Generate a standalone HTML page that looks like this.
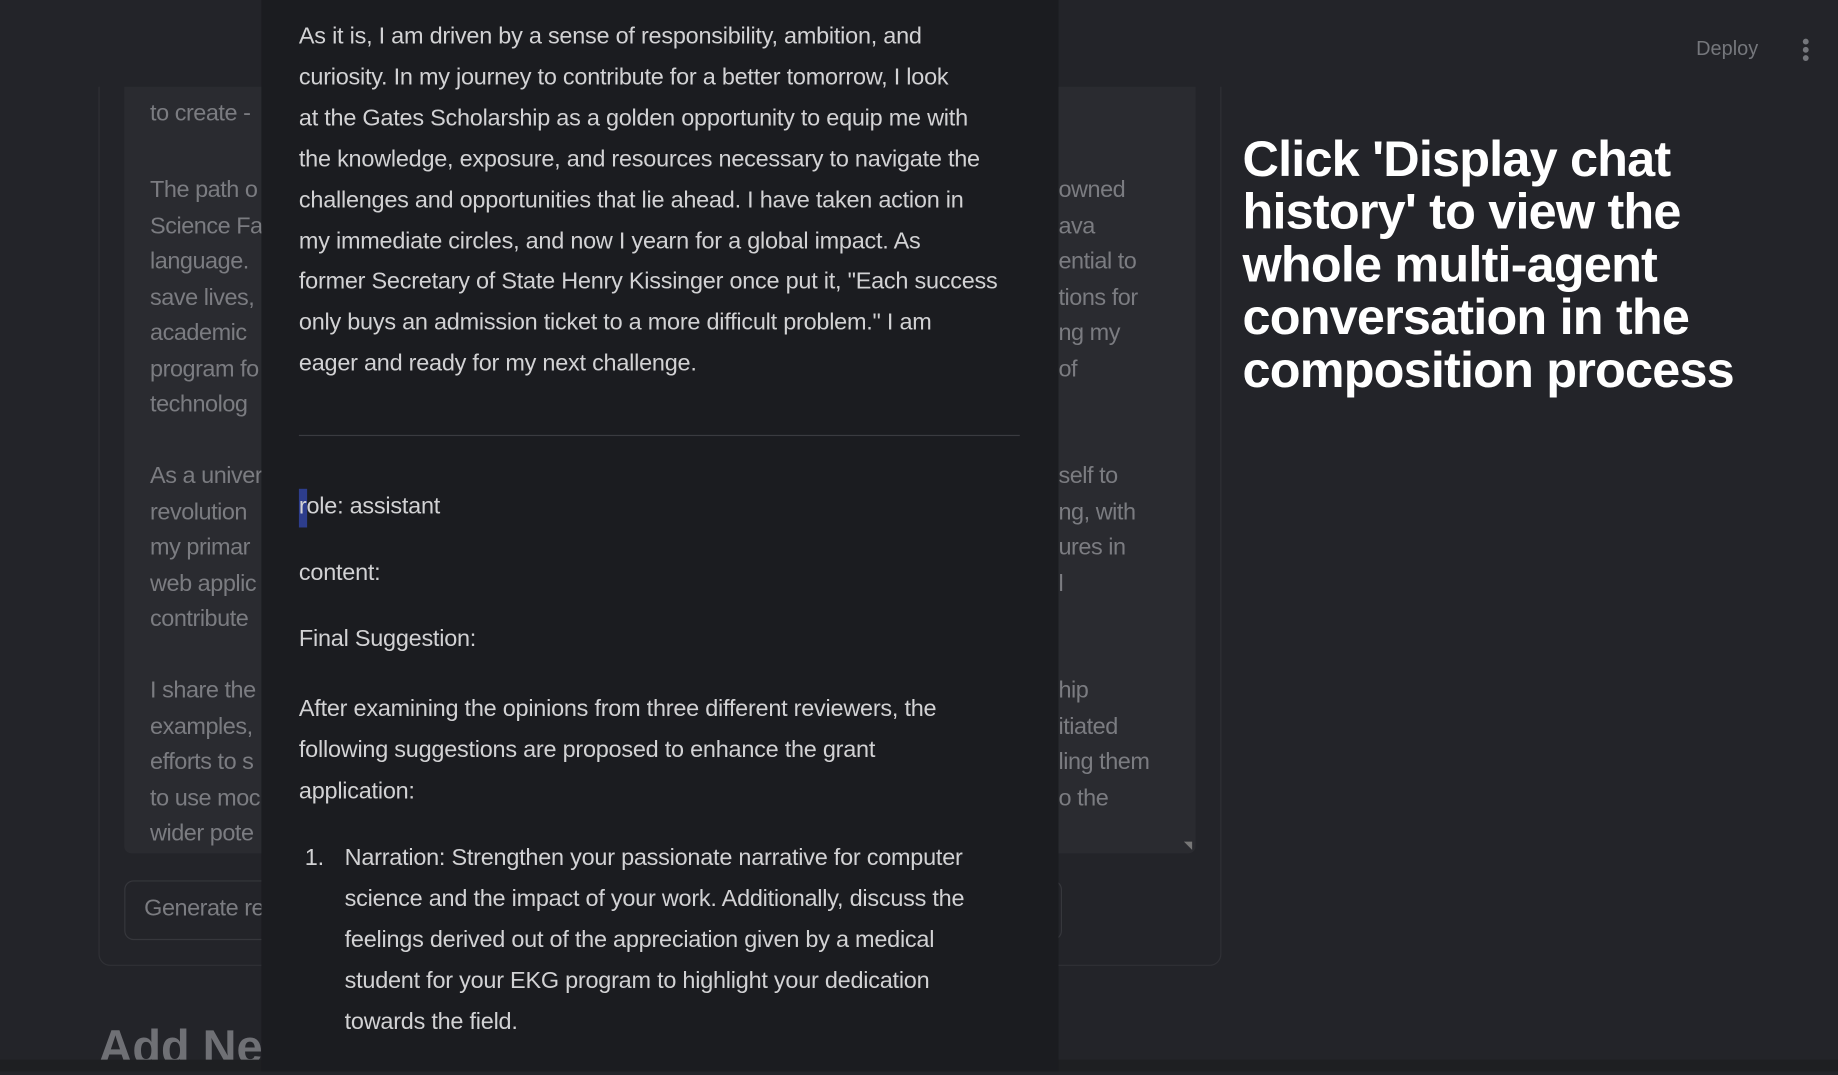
<!DOCTYPE html>
<html><head><meta charset="utf-8"><style>
*{margin:0;padding:0;box-sizing:border-box}
html,body{width:1838px;height:1071px;overflow:hidden;background:#232429}
#w{position:absolute;left:0;top:0;width:1568px;height:914px;transform:scale(1.17219);transform-origin:0 0;font-family:"Liberation Sans",sans-serif}
.a{position:absolute;white-space:nowrap}
.bg{color:#7b7c81;font-size:20px;letter-spacing:-0.4px}
.m{color:#d2d2d4;font-size:20px;letter-spacing:-0.2px}
.h{color:#fff;font-size:43px;font-weight:bold;letter-spacing:-0.7px;line-height:45px}
</style></head><body><div id="w">
<div class="a" style="left:84px;top:40px;width:958px;height:784px;border:1px solid #303136;border-radius:10px"></div>
<div class="a" style="left:106px;top:60px;width:914px;height:668px;background:#2a2b30;border-radius:6px"></div>
<div class="a" style="left:1010px;top:718px;width:0;height:0;border-left:7px solid transparent;border-top:7px solid #777"></div>
<div class="a" style="left:106px;top:751px;width:800px;height:51px;border:1px solid #36373c;border-radius:8px"></div>
<div class="a bg" style="left:123px;top:764px">Generate re</div>
<div class="a" style="left:0;top:0;width:1568px;height:74px;background:#232429"></div>
<div class="a bg" style="left:128px;top:86px">to create -</div>
<div class="a bg" style="left:128px;top:147px;line-height:30.5px">The path o<br>Science Fa<br>language.<br>save lives,<br>academic<br>program fo<br>technolog</div>
<div class="a bg" style="left:128px;top:391px;line-height:30.5px">As a univer<br>revolution<br>my primar<br>web applic<br>contribute</div>
<div class="a bg" style="left:128px;top:574px;line-height:30.5px">I share the<br>examples,<br>efforts to s<br>to use moc<br>wider pote</div>
<div class="a bg" style="left:903px;top:147px;line-height:30.5px">owned<br>ava<br>ential to<br>tions for<br>ng my<br>of</div>
<div class="a bg" style="left:903px;top:391px;line-height:30.5px">self to<br>ng, with<br>ures in<br>l</div>
<div class="a bg" style="left:903px;top:574px;line-height:30.5px">hip<br>itiated<br>ling them<br>o the</div>
<div class="a" style="left:84px;top:872px;color:#6f7075;font-size:40px;font-weight:bold">Add Ne</div>
<div class="a" style="left:0;top:904px;width:1568px;height:10px;background:#1e1f22"></div>
<div class="a" style="left:1447px;top:32px;color:#75777c;font-size:17px">Deploy</div>
<div class="a" style="left:1538px;top:33px;width:5px;height:5px;border-radius:50%;background:#75777c;box-shadow:0 7px 0 #75777c,0 14px 0 #75777c"></div>
<div class="a" style="left:223px;top:0;width:680px;height:914px;background:#1b1c20"></div>
<div class="a m" style="left:255px;top:14px;line-height:34.9px">As it is, I am driven by a sense of responsibility, ambition, and<br>curiosity. In my journey to contribute for a better tomorrow, I look<br>at the Gates Scholarship as a golden opportunity to equip me with<br>the knowledge, exposure, and resources necessary to navigate the<br>challenges and opportunities that lie ahead. I have taken action in<br>my immediate circles, and now I yearn for a global impact. As<br>former Secretary of State Henry Kissinger once put it, "Each success<br>only buys an admission ticket to a more difficult problem." I am<br>eager and ready for my next challenge.</div>
<div class="a" style="left:255px;top:371px;width:615px;height:1px;background:#3a3b40"></div>
<div class="a" style="left:255px;top:417px;width:7px;height:33px;background:#2d3d8c"></div>
<div class="a m" style="left:255px;top:421px">role: assistant</div>
<div class="a m" style="left:255px;top:478px">content:</div>
<div class="a m" style="left:255px;top:534px">Final Suggestion:</div>
<div class="a m" style="left:255px;top:588px;line-height:34.9px">After examining the opinions from three different reviewers, the<br>following suggestions are proposed to enhance the grant<br>application:</div>
<div class="a m" style="left:260px;top:715px;line-height:34.9px">1.</div>
<div class="a m" style="left:294px;top:715px;line-height:34.9px">Narration: Strengthen your passionate narrative for computer<br>science and the impact of your work. Additionally, discuss the<br>feelings derived out of the appreciation given by a medical<br>student for your EKG program to highlight your dedication<br>towards the field.</div>
<div class="a h" style="left:1060px;top:114px">Click 'Display chat<br>history' to view the<br>whole multi-agent<br>conversation in the<br>composition process</div>
</div></body></html>
